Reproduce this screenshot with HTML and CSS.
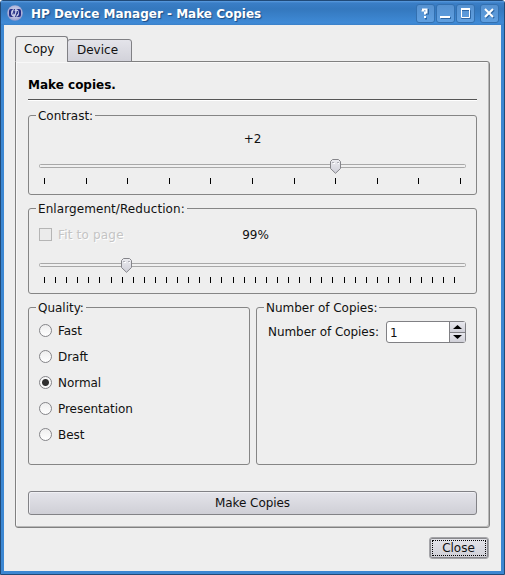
FILE: index.html
```html
<!DOCTYPE html>
<html lang="en">
<head>
<meta charset="utf-8">
<title>HP Device Manager - Make Copies</title>
<link rel="stylesheet" href="styles.css">
</head>
<body>
<div class="window">
  <header class="titlebar">
    <svg class="logo" width="16" height="16" viewBox="0 0 16 16">
      <defs><radialGradient id="ball" cx="50%" cy="45%" r="55%"><stop offset="0" stop-color="#d8daf0"/><stop offset=".7" stop-color="#b4b8dc"/><stop offset="1" stop-color="#9098cc"/></radialGradient></defs>
      <circle cx="8" cy="8" r="7.8" fill="url(#ball)"/>
      <rect x="2" y="4" width="12" height="8" rx="2" fill="#252c84"/>
      <circle cx="8" cy="8" r="4" fill="#c9cde8"/>
      <path d="M7.6 4L5.7 9.3M6.9 6.6H7.9L7 9.3M10.4 6.6L8.5 12M9.7 6.7H11L10.1 9.2H9" fill="none" stroke="#252c84" stroke-width="1"/>
    </svg>
    <h1 class="title">HP Device Manager - Make Copies</h1>
    <div class="controls">
      <button class="ctl"><svg width="19" height="19"><path class="sh" d="M6 7V6H12V9.5H10V11M9 14.5H11"/><path d="M5.5 6.5H7V5.5H10.5V8.5H9V10.5M8 13H10"/></svg></button>
      <button class="ctl"><svg width="19" height="19"><path class="sh" d="M5 14H15"/><path d="M4 13H14"/></svg></button>
      <button class="ctl"><svg width="19" height="19"><path class="sh thin" d="M5.5 6.5H14.5V14.5H5.5Z"/><path class="thin" d="M5.5 5.5H13.5V13.5H5.5Z"/><path d="M5 5H14"/></svg></button>
      <button class="ctl close"><svg width="19" height="19"><path class="sh" d="M6 6L14 14M14 6L6 14"/><path d="M5 5L13 13M13 5L5 13"/></svg></button>
    </div>
  </header>
  <main class="body">
    <nav class="tabs">
      <div class="tab active">Copy</div>
      <div class="tab">Device</div>
    </nav>
    <section class="pane">
      <h2 class="heading">Make copies.</h2>
      <div class="group contrast">
        <span class="legend">Contrast:</span>
        <div class="value">+2</div>
        <svg class="slider" width="427" height="30">
          <rect class="track" x=".5" y="5.5" width="426" height="3" rx="1"/>
          <use href="#thumb" x="291" y="0"/>
          <path class="ticks" d="M5.5 19v6m42-6v6m41-6v6m42-6v6m41-6v6m42-6v6m42-6v6m41-6v6m42-6v6m41-6v6m42-6v6"/>
        </svg>
      </div>
      <div class="group zoom">
        <span class="legend">Enlargement/Reduction:</span>
        <div class="fit"><span class="check"></span><span class="fit-label">Fit to page</span></div>
        <div class="value">99%</div>
        <svg class="slider" width="427" height="30">
          <defs>
            <linearGradient id="knob" x2="0" y2="1"><stop offset="0" stop-color="#ececf0"/><stop offset="1" stop-color="#cfcfd8"/></linearGradient>
            <g id="thumb"><path d="M2.5 .5H8.5L10.5 2.5V9.5L5.5 14.3L.5 9.5V2.5Z" fill="url(#knob)" stroke="#85858a"/><path d="M2 3.5h2M7 3.5h2" stroke="#b0b0b8"/><path d="M3 4.5h2M8 4.5h1" stroke="#fff"/></g>
          </defs>
          <rect class="track" x=".5" y="5.5" width="426" height="3" rx="1"/>
          <use href="#thumb" x="82" y="0"/>
          <path class="ticks" d="M5.5 19v6m11-6v6m11-6v6m11-6v6m11-6v6m11-6v6m12-6v6m11-6v6m11-6v6m11-6v6m11-6v6m11-6v6m11-6v6m11-6v6m11-6v6m11-6v6m11-6v6m12-6v6m11-6v6m11-6v6m11-6v6m11-6v6m11-6v6m11-6v6m11-6v6m11-6v6m11-6v6m12-6v6m11-6v6m11-6v6m11-6v6m11-6v6m11-6v6m11-6v6m11-6v6m11-6v6m11-6v6m11-6v6"/>
        </svg>
      </div>
      <div class="columns">
        <div class="group quality">
          <span class="legend">Quality:</span>
          <div class="option"><i class="radio"></i><span>Fast</span></div>
          <div class="option"><i class="radio"></i><span>Draft</span></div>
          <div class="option"><i class="radio on"></i><span>Normal</span></div>
          <div class="option"><i class="radio"></i><span>Presentation</span></div>
          <div class="option"><i class="radio"></i><span>Best</span></div>
        </div>
        <div class="group copies">
          <span class="legend">Number of Copies:</span>
          <div class="field">
            <span class="field-label">Number of Copies:</span>
            <div class="spin">
              <span class="num">1</span>
              <div class="arrows">
                <span class="arrow"><svg width="9" height="4"><path d="M0 4L4.5 0L9 4Z"/></svg></span>
                <span class="arrow"><svg width="9" height="4"><path d="M0 0L4.5 4L9 0Z"/></svg></span>
              </div>
            </div>
          </div>
        </div>
      </div>
      <button class="push make">Make Copies</button>
    </section>
    <footer class="footer"><button class="push dismiss"><span>Close</span></button></footer>
  </main>
</div>
</body>
</html>
```
FILE: styles.css
```css
* { box-sizing: border-box; }
body { margin: 0; width: 505px; height: 575px; overflow: hidden; background: #fff; font: 12px/14px "DejaVu Sans", sans-serif; color: #111; }
button { font: inherit; color: inherit; padding: 0; }
svg { display: block; }
.window { height: 575px; border: 1px solid #204a78; border-radius: 3px 3px 0 0; background: #3c87d2; padding: 0 3px 3px; display: flex; flex-direction: column; }
.titlebar { height: 24px; margin: 0 -3px; padding: 0 5px 0 6px; display: flex; align-items: center; background: linear-gradient(#5b9de0 0, #3a7ec6 2px, #3478be 8px, #3f8ad6 22px, #3a80c8 24px); }
.title { margin: 0 0 0 8px; font-size: 12px; line-height: 14px; color: #fff; text-shadow: 1px 1px 1px #1c4a80; flex: 1; white-space: nowrap; padding-top: 2px; }
.controls { display: flex; gap: 1px; padding-top: 1px; }
.ctl { width: 19px; height: 19px; border: 1px solid #3370b0; border-radius: 3px; background: linear-gradient(#5591d0, #5f9fe0); }
.ctl.close { margin-left: 4px; }
.ctl svg { margin: -1px; }
.ctl path { fill: none; stroke: #fff; stroke-width: 2; }
.ctl .sh { stroke: #2d66a4; }
.ctl .thin { stroke-width: 1; }
.body { flex: 1; background: #eee; padding: 11px 11px 0; display: flex; flex-direction: column; }
.tabs { display: flex; align-items: flex-end; height: 26px; position: relative; z-index: 1; margin-bottom: -1px; }
.tab { border: 1px solid #808084; border-radius: 3px 3px 0 0; height: 23px; width: 65px; padding: 3px 0 0 9px; background: linear-gradient(#e4e4ea, #d2d2da); margin-left: -1px; }
.tab.active { height: 26px; width: 53px; padding: 5px 0 0 8px; background: #eee; border-bottom-color: #eee; margin: 0; }
.pane { height: 467px; border: 1px solid #808080; border-radius: 0 3px 3px 3px; box-shadow: inset -1px -1px #b8b8b8, inset 1px 1px #f8f8f8; padding: 16px 12px 0; width: 475px; }
.heading { margin: 0; height: 22px; font-size: 12px; line-height: 14px; border-bottom: 1px solid #555; box-shadow: 0 1px #fff; color: #000; }
.group { position: relative; border: 1px solid #858585; border-radius: 3px; padding: 0 10px; }
.legend { position: absolute; left: 7px; top: -7px; padding: 0 2px; background: #eee; white-space: nowrap; letter-spacing: -.02px; }
.zoom .legend { letter-spacing: .08px; }
.contrast { height: 80px; margin-top: 15px; padding-top: 16px; }
.value { text-align: center; height: 14px; }
.slider { margin-top: 13px; }
.track { fill: #f0f0f0; stroke: #a8a8a8; }
.ticks { stroke: #000; fill: none; }
.zoom { height: 86px; margin-top: 13px; padding-top: 19px; display: grid; grid-template-columns: 427px; grid-template-rows: 14px 43px; }
.fit, .zoom .value { grid-area: 1 / 1; }
.zoom .value { padding-left: 6px; }
.fit { display: flex; align-items: center; gap: 6px; height: 13px; color: #c4c4c4; text-shadow: 1px 1px #fff; }
.fit-label { letter-spacing: .18px; }
.check { width: 13px; height: 13px; border: 1px solid #b5b5b5; background: #ebebeb; }
.zoom .slider { margin-top: 16px; }
.columns { display: flex; gap: 6px; margin-top: 13px; }
.quality { width: 222px; height: 158px; padding-top: 9px; }
.option { height: 26px; display: flex; align-items: center; gap: 6px; letter-spacing: -.05px; }
.option span { padding-top: 2px; }
.radio { width: 13px; height: 13px; border: 1px solid #858589; border-radius: 50%; background: linear-gradient(#eee, #fff); }
.radio.on { background: radial-gradient(circle, #303030 3px, #f8f8f8 4px); }
.copies { flex: 1; padding: 13px 10px 0 11px; }
.field { display: flex; align-items: center; justify-content: space-between; }
.field-label { letter-spacing: -.05px; }
.spin { width: 80px; height: 22px; border: 1px solid #808084; border-radius: 3px; background: #fff; display: flex; justify-content: space-between; }
.num { padding: 4px 0 0 3px; }
.arrows { width: 16px; border-left: 1px solid #808084; display: flex; flex-direction: column; }
.arrow { flex: 1; display: flex; align-items: center; justify-content: center; background: linear-gradient(#e8e8ee, #d0d0d8); }
.arrow + .arrow { border-top: 1px solid #808084; }
.push { border: 1px solid #828286; border-radius: 3px; background: linear-gradient(#e4e4ea, #cfcfd6); display: block; color: #111; }
.make { width: 449px; height: 24px; margin-top: 26px; box-shadow: inset 1px 1px #f0f0f4; letter-spacing: -.08px; }
.footer { display: flex; justify-content: flex-end; margin: 9px 1px 0 0; }
.dismiss { width: 60px; height: 22px; border: 1px solid #a4a4a8; box-shadow: inset 0 0 0 1px #88888c; padding: 2px; }
.dismiss span { display: block; height: 16px; line-height: 15px; border: 1px dotted #000; padding-right: 1px; }
```
